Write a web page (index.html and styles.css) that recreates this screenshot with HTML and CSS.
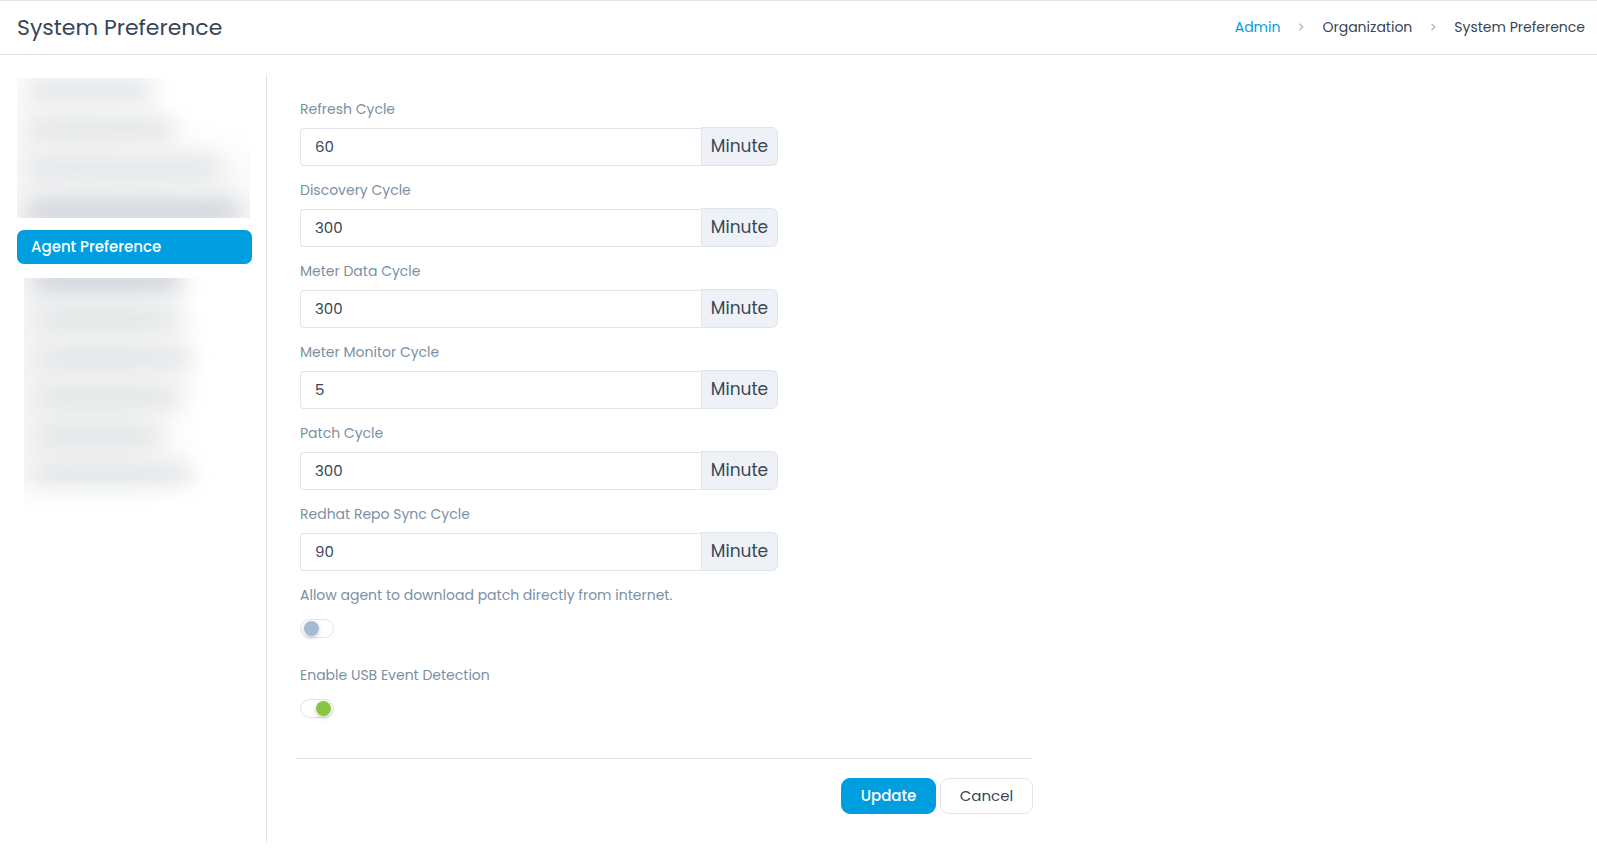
FILE: index.html
```html
<!DOCTYPE html>
<html lang="en">
<head>
<meta charset="utf-8">
<meta name="viewport" content="width=device-width, initial-scale=1">
<title>System Preference</title>
<link rel="stylesheet" href="styles.css">
</head>
<body>
<header class="topbar">
  <h1 class="title">System Preference</h1>
  <nav class="crumbs" aria-label="Breadcrumb">
    <a class="crumb-link" href="#">Admin</a>
    <svg class="chevron" viewBox="0 0 6 8" aria-hidden="true"><path d="M1.5 .8 4.7 4 1.5 7.2"/></svg>
    <span>Organization</span>
    <svg class="chevron" viewBox="0 0 6 8" aria-hidden="true"><path d="M1.5 .8 4.7 4 1.5 7.2"/></svg>
    <span>System Preference</span>
  </nav>
</header>
<div class="layout">
  <nav class="sidebar" aria-label="Preferences">
    <div class="veil veil-top" aria-hidden="true">
      <i class="smudge w-s"></i><i class="smudge w-m"></i><i class="smudge w-l"></i><i class="smudge w-xl dark"></i>
    </div>
    <a class="active" href="#" aria-current="page">Agent Preference</a>
    <div class="veil veil-bottom" aria-hidden="true">
      <i class="smudge w-m dark"></i><i class="smudge w-m"></i><i class="smudge w-n"></i><i class="smudge w-m"></i><i class="smudge w-s"></i><i class="smudge w-n"></i>
    </div>
  </nav>
  <main class="content">
    <form class="form">
      <div class="fields">
        <div class="field"><label for="refresh">Refresh Cycle</label><div class="group"><input id="refresh" type="text" value="60"><span class="unit">Minute</span></div></div>
        <div class="field"><label for="discovery">Discovery Cycle</label><div class="group"><input id="discovery" type="text" value="300"><span class="unit">Minute</span></div></div>
        <div class="field"><label for="meter-data">Meter Data Cycle</label><div class="group"><input id="meter-data" type="text" value="300"><span class="unit">Minute</span></div></div>
        <div class="field"><label for="meter-monitor">Meter Monitor Cycle</label><div class="group"><input id="meter-monitor" type="text" value="5"><span class="unit">Minute</span></div></div>
        <div class="field"><label for="patch">Patch Cycle</label><div class="group"><input id="patch" type="text" value="300"><span class="unit">Minute</span></div></div>
        <div class="field"><label for="redhat">Redhat Repo Sync Cycle</label><div class="group"><input id="redhat" type="text" value="90"><span class="unit">Minute</span></div></div>
        <div class="option"><label for="direct">Allow agent to download patch directly from internet.</label><input class="switch" id="direct" type="checkbox"></div>
        <div class="option"><label for="usb">Enable USB Event Detection</label><input class="switch" id="usb" type="checkbox" checked></div>
      </div>
      <div class="actions">
        <button class="btn primary" type="submit">Update</button>
        <button class="btn" type="button">Cancel</button>
      </div>
    </form>
  </main>
</div>
</body>
</html>
```
FILE: styles.css
```css
* { box-sizing: border-box; }
body {
  margin: 0;
  background: #fff;
  color: #364658;
  font-family: Poppins, Inter, "Open Sans", sans-serif;
  font-size: 15px;
  line-height: 24px;
}
a { text-decoration: none; }
.topbar {
  display: flex;
  align-items: center;
  justify-content: space-between;
  padding: 10px 12px 10px 17px;
  border-top: 1px solid #dee5ef;
  border-bottom: 1px solid #dee5ef;
}
.title { margin: 0; font-size: 22px; line-height: 33px; font-weight: 400; }
.crumbs { display: flex; align-items: center; gap: 18px; padding-bottom: 2px; font-size: 14px; }
.crumb-link { color: #009ddf; }
.chevron { width: 6px; height: 8px; fill: none; stroke: #a5b8d1; stroke-width: 1.3; }

.layout { display: flex; padding: 19px 0 10px; }
.sidebar {
  flex: none;
  width: 267px;
  min-height: 768px;
  padding: 4px 14px 0 17px;
  border-right: 1px solid #dee5ef;
}
.veil { overflow: hidden; display: flex; flex-direction: column; gap: 15px; }
.veil-top {
  height: 140px;
  margin-right: 2px;
  background: linear-gradient(15deg, #f5f6f7 0, #fafafa 50%, #fff 75%);
}
.veil-bottom {
  height: 232px;
  margin: 14px 22px 0 7px;
  background: linear-gradient(90deg, #f6f7f7, #f6f7f7 50%, #fff 88%);
  mask-image: linear-gradient(#000 86%, transparent);
}
.smudge {
  flex: none;
  height: 24px;
  margin-left: 8px;
  border-radius: 12px;
  background: #e2e4e6;
  filter: blur(11px);
}
.dark { background: #ced2d7; }
.w-s { width: 130px; }
.w-m { width: 150px; }
.w-n { width: 160px; }
.w-l { width: 198px; }
.w-xl { width: 216px; }
.veil-top .dark { margin-top: 4px; }
.veil-bottom .smudge:first-child { margin-top: -10px; }
.active {
  display: block;
  margin-top: 12px;
  padding: 5px 14px;
  border-radius: 7px;
  background: #009ddf;
  color: #fff;
  font-weight: 500;
}

.content { flex: 1; min-width: 0; padding: 23px 29px 0; }
.form { max-width: 737px; }
.fields { max-width: 482px; padding-left: 4px; margin-bottom: 40px; }
.field { margin-bottom: 12px; }
.field label, .option label { display: block; color: #7b8fa5; font-size: 14px; }
.group { display: flex; align-items: flex-end; margin-top: 6px; }
.group input {
  flex: 1;
  min-width: 0;
  height: 38px;
  padding: 0 14px 2px;
  border: 1px solid #dee5ef;
  border-right: 0;
  border-radius: 4px 0 0 4px;
  background: #fff;
  color: inherit;
  font: inherit;
}
.unit {
  height: 39px;
  width: 77px;
  border: 1px solid #dee5ef;
  border-radius: 0 6px 6px 0;
  background: #eef2f6;
  font-size: 17px;
  line-height: 37px;
  text-align: center;
}
.option + .option { margin-top: 25px; }
.switch {
  appearance: none;
  display: flex;
  align-items: center;
  width: 34px;
  height: 19px;
  margin: 12px 0 0;
  padding: 0 2px 0 3px;
  border: 1px solid #dee5ef;
  border-radius: 10px;
}
.switch::before {
  content: "";
  width: 15px;
  height: 15px;
  border-radius: 50%;
  background: #a5bad2;
  box-shadow: 0 2px 4px rgba(0, 35, 11, .2);
}
.switch:checked { justify-content: flex-end; }
.switch:checked::before { background: #89c540; }
.actions {
  display: flex;
  justify-content: flex-end;
  gap: 4px;
  padding-top: 19px;
  border-top: 1px solid #dee5ef;
}
.btn {
  width: 93px;
  height: 36px;
  padding: 0;
  border: 1px solid #dee5ef;
  border-radius: 9px;
  background: #fff;
  color: inherit;
  font: inherit;
}
.primary { width: 95px; border-color: #009ddf; background: #009ddf; color: #fff; font-weight: 500; }
```
